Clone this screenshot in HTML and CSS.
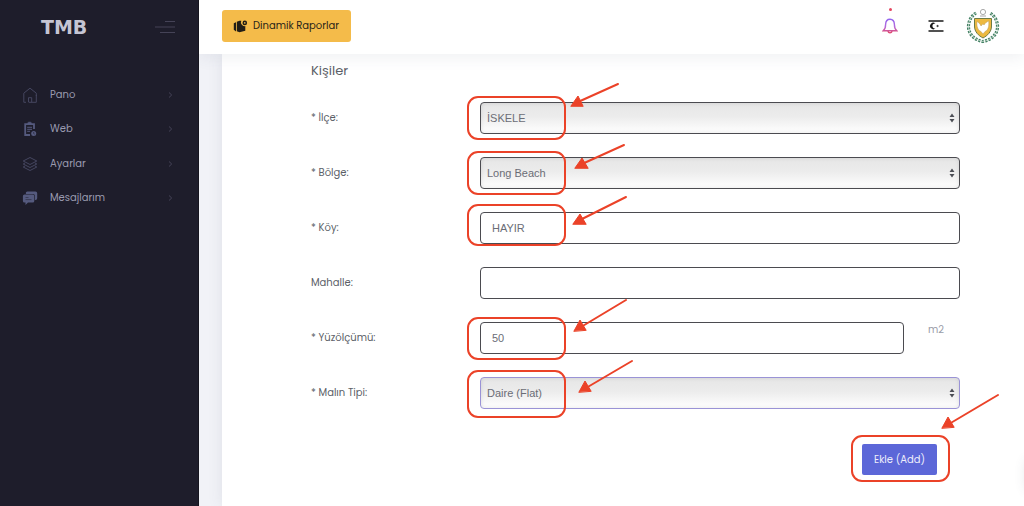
FILE: index.html
```
<!DOCTYPE html>
<html lang="tr">
<head>
<meta charset="utf-8">
<title>TMB</title>
<link rel="stylesheet" href="styles.css">
</head>
<body>
<div class="app">
  <aside class="sidebar">
    <div class="brand">
      <a class="logo" href="#">TMB</a>
      <button class="toggle" aria-label="Menü">
        <svg width="22" height="14" viewBox="0 0 22 14" stroke="#454357" stroke-width="1.2"><path d="M11 1.5h10M1 7h20M6 12.5h15"/></svg>
      </button>
    </div>
    <nav class="menu">
      <a href="#">
        <svg class="icon" viewBox="0 0 16 16" fill="none" stroke="#454660"><path d="M4 15.3H1.8V6.2L8 1.200l6.300 5V9M14.300 8v7.300H7M6.500 15.300v-4.600h3.200v4.600"/></svg>
        <span>Pano</span>
        <svg class="chevron" viewBox="0 0 6 8" fill="none" stroke="#454357"><path d="M1 1.500 3.700 4 1 6.500"/></svg>
      </a>
      <a href="#">
        <svg class="icon" viewBox="0 0 16 16" fill="none" stroke="#555a7e"><path stroke-width="1.800" d="M8 14H3.200V3.200H12V8"/><path stroke-width="2" d="M5.500 2.500h4.200"/><path d="M6.300 1.300h2.500M5.200 6.300H10M5.200 8.300H10M5.200 10.300H8"/><circle cx="11.700" cy="12.500" r="2.500" fill="#555a7e" stroke="none"/><path stroke="#1e1d2b" stroke-width=".6" d="M11.700 11v1.600l1 .6"/></svg>
        <span>Web</span>
        <svg class="chevron" viewBox="0 0 6 8" fill="none" stroke="#454357"><path d="M1 1.500 3.700 4 1 6.500"/></svg>
      </a>
      <a href="#">
        <svg class="icon" viewBox="0 0 16 16" fill="none" stroke="#454660" stroke-linejoin="round"><path d="M8 1.500 14.800 5 8 8.500 1.200 5zM3 7 1.200 8 8 11.500 14.800 8 13 7M3 10l-1.800 1L8 14.500 14.800 11 13 10"/></svg>
        <span>Ayarlar</span>
        <svg class="chevron" viewBox="0 0 6 8" fill="none" stroke="#454357"><path d="M1 1.500 3.700 4 1 6.500"/></svg>
      </a>
      <a href="#">
        <svg class="icon" viewBox="0 0 16 16" fill="#555a7e"><path d="M5.500 1.500h8a1.700 1.700 0 0 1 1.700 1.700v5a1.700 1.700 0 0 1-1.700 1.700h-.6V6a2 2 0 0 0-2-2H4a1.700 1.700 0 0 1 1.500-2.500z"/><path d="M2.500 4.500h8.200A1.600 1.600 0 0 1 12.300 6v5a1.600 1.600 0 0 1-1.600 1.600H6L3.500 15v-2.400h-1A1.600 1.600 0 0 1 .9 11V6a1.600 1.600 0 0 1 1.600-1.500z"/><path stroke="#34364d" stroke-width=".8" d="M3.500 7.500h3M3.500 9.600h6"/></svg>
        <span>Mesajlarım</span>
        <svg class="chevron" viewBox="0 0 6 8" fill="none" stroke="#454357"><path d="M1 1.500 3.700 4 1 6.500"/></svg>
      </a>
    </nav>
  </aside>

  <div class="page">
    <header class="topbar">
      <button class="reports">
        <svg width="15" height="13" viewBox="0 0 15 13" fill="#211d16"><path d="M.8 3.300 3 2.200v9.300L.8 9.800zM3.800 1.800 6.500.7h1.800a3.800 3.800 0 0 0 4 5.400v4.600L6.500 12.300l-2.700-1z"/><circle cx="11.800" cy="2.900" r="2.300"/><circle cx="11.800" cy="2.900" r=".8" fill="#f4bb4a"/></svg>
        <span>Dinamik Raporlar</span>
      </button>
      <div class="tools">
        <button class="bell" aria-label="Bildirimler">
          <svg width="16" height="16" viewBox="0 0 16 16" fill="none" stroke-width="1.400">
            <defs><linearGradient id="bell" x1="0" y1="0" x2="0" y2="1"><stop offset="0" stop-color="#9365ef"/><stop offset=".55" stop-color="#b36adb"/><stop offset="1" stop-color="#e14b72"/></linearGradient></defs>
            <path stroke="url(#bell)" d="M8 1.200C5 1.200 3.700 3.500 3.600 6.500c0 3-.6 4.800-2.400 6.300h13.600c-1.800-1.500-2.400-3.300-2.400-6.300C12.300 3.500 11 1.200 8 1.200zM6 13.300c.4 2 3.600 2 4 0"/>
          </svg>
          <i class="dot"></i>
        </button>
        <button aria-label="Dil">
          <svg width="16" height="12" viewBox="0 0 16 12"><path stroke="#191919" stroke-width="1.300" d="M.5 1h15M.5 11h15"/><path fill="#191919" d="M7.500 3.700A3.200 3.200 0 1 0 7.500 8.300 2.400 2.400 0 1 1 7.500 3.700zM8 6l1-.4L9.100 4.500l.7.9 1-.3-.6.9.6.900-1-.3-.7.900L9 6.400z"/></svg>
        </button>
        <button aria-label="Profil">
          <svg width="34" height="36" viewBox="0 0 34 36" fill="none">
            <path stroke="#438064" stroke-width="3.200" stroke-dasharray="2.200 1.200" d="M10 5C-1 12-1 30 17 33.500C35 30 35 12 24 5"/>
            <path stroke="#dbe9df" stroke-width=".7" d="M10 5C-1 12-1 30 17 33.500C35 30 35 12 24 5"/>
            <circle cx="17" cy="4" r="2.600" stroke="#aaa"/><path stroke="#aaa" d="M14 8h6"/>
            <path fill="#edb940" stroke="#6d7b47" d="M8.500 10.500h17V18c0 6-4 9.500-8.500 12-4.500-2.500-8.500-6-8.500-12z"/>
            <path fill="#fff" stroke="#b99a5c" stroke-width=".5" d="M11 13.500c1.500 1 3 2 4 4.500l2-2.200 1 1.200c1-2 2.500-3 4.700-4 .6 6-.8 9.300-3.700 10.500l-2 2.500-2-2.500c-3-1-4.600-5-4-10z"/>
          </svg>
        </button>
      </div>
    </header>

    <main class="content">
      <form class="card">
        <h1>Kişiler</h1>

        <div class="row">
          <label for="ilce">* İlçe:</label>
          <div class="field">
            <select id="ilce"><option>İSKELE</option></select>
            <svg class="updown" viewBox="0 0 6 10"><path d="M.5 4 3 .5 5.500 4zM.5 6 3 9.500 5.500 6z"/></svg>
            <svg class="mark"><rect x="-12" y="-5" width="97" height="42" rx="10"/><path d="M138-18 98 0"/><path class="tip" d="M91 4 98-6 103 4z"/></svg>
          </div>
        </div>

        <div class="row">
          <label for="bolge">* Bölge:</label>
          <div class="field">
            <select id="bolge"><option>Long Beach</option></select>
            <svg class="updown" viewBox="0 0 6 10"><path d="M.5 4 3 .5 5.500 4zM.5 6 3 9.500 5.500 6z"/></svg>
            <svg class="mark"><rect x="-12" y="-5" width="97" height="42" rx="10"/><path d="M144-12 102 7"/><path class="tip" d="M95 11 102 1 108 11z"/></svg>
          </div>
        </div>

        <div class="row">
          <label for="koy">* Köy:</label>
          <div class="field">
            <input id="koy" type="text" value="HAYIR">
            <svg class="mark"><rect x="-12" y="-7" width="97" height="40" rx="10"/><path d="M146-15 100 8"/><path class="tip" d="M93 12 100 2 106 12z"/></svg>
          </div>
        </div>

        <div class="row">
          <label for="mahalle">Mahalle:</label>
          <div class="field"><input id="mahalle" type="text"></div>
        </div>

        <div class="row">
          <label for="alan">* Yüzölçümü:</label>
          <div class="field measured">
            <input id="alan" type="text" value="50">
            <span class="unit">m2</span>
            <svg class="mark"><rect x="-12" y="-4" width="97" height="41" rx="10"/><path d="M146-22 101 5"/><path class="tip" d="M94 9 100-2 106 8z"/></svg>
          </div>
        </div>

        <div class="row">
          <label for="tip">* Malın Tipi:</label>
          <div class="field">
            <select id="tip" class="active"><option>Daire (Flat)</option></select>
            <svg class="updown" viewBox="0 0 6 10"><path d="M.5 4 3 .5 5.500 4zM.5 6 3 9.500 5.500 6z"/></svg>
            <svg class="mark"><rect x="-12" y="-6" width="97" height="46" rx="10"/><path d="M152-16 106 11"/><path class="tip" d="M99 15 105 4 111 14z"/></svg>
          </div>
        </div>

        <div class="actions">
          <div class="field">
            <button class="add" type="button">Ekle (Add)</button>
            <svg class="mark"><rect x="-10" y="-8" width="97" height="45" rx="10"/><path d="M136-49 87-20"/><path class="tip" d="M80-16 86-27 92-17z"/></svg>
          </div>
        </div>
      </form>
    </main>
  </div>
  <div class="drawer"></div>
</div>
</body>
</html>
```
FILE: styles.css
```
* {
  box-sizing: border-box;
}

body {
  margin: 0;
  font-family: Poppins, Inter, sans-serif;
  font-size: 10px;
  line-height: 16px;
  color: #5c5f68;
  background: #f1f2f7;
}

button {
  font: inherit;
  border: 0;
  padding: 0;
  background: none;
  cursor: pointer;
}

svg {
  display: block;
}

.app {
  position: relative;
  display: flex;
  min-height: 100vh;
  overflow: hidden;
}

.sidebar {
  flex: none;
  width: 199px;
  background: #1e1d2b;
  border-right: 1px solid #16151f;
}

.brand {
  display: flex;
  align-items: center;
  justify-content: space-between;
  height: 54px;
  padding: 0 22px 0 41px;
}

.logo {
  font-family: "DejaVu Sans", sans-serif;
  font-size: 19px;
  font-weight: bold;
  line-height: 20px;
  color: #c5c5d3;
  text-decoration: none;
}

.menu {
  display: flex;
  flex-direction: column;
  padding-top: 23px;
}

.menu a {
  display: flex;
  align-items: center;
  height: 34px;
  padding: 0 24px 0 22px;
  color: #9a9bb0;
  text-decoration: none;
}

.menu a:nth-child(odd) {
  height: 35px;
}

.menu .icon {
  width: 16px;
  height: 16px;
  margin-right: 12px;
}

.chevron {
  width: 6px;
  height: 8px;
  margin-left: auto;
}

.page {
  flex: 1;
  min-width: 0;
  display: flex;
  flex-direction: column;
}

.topbar {
  position: relative;
  z-index: 1;
  display: flex;
  align-items: center;
  justify-content: space-between;
  height: 54px;
  padding: 0 24px 2px 23px;
  background: #fff;
  box-shadow: 0 4px 14px rgba(70, 75, 100, 0.08);
  clip-path: inset(0 0 -24px 0);
}

.reports {
  display: flex;
  align-items: center;
  gap: 5px;
  height: 32px;
  padding: 0 12px 0 11px;
  border-radius: 3px;
  color: #292419;
  background: #f4bb4a;
}

.tools {
  display: flex;
  align-items: center;
  gap: 30px;
}

.tools button:last-child {
  margin-left: -8px;
}

.bell {
  position: relative;
}

.dot {
  position: absolute;
  top: -10px;
  left: 7px;
  width: 3px;
  height: 3px;
  border-radius: 50%;
  background: #e6465f;
}

.content {
  flex: 1;
  display: flex;
  padding-left: 23px;
}

.card {
  flex: 1;
  padding: 8px 64px 24px 89px;
  background: #fff;
  box-shadow: 0 0 14px rgba(70, 75, 100, 0.1);
}

h1 {
  margin: 0 0 22px;
  font-size: 13px;
  font-weight: 400;
  line-height: 18px;
}

.row {
  display: grid;
  grid-template-columns: 169px 1fr;
  margin-bottom: 23px;
}

.row label {
  padding-top: 8px;
}

.field {
  position: relative;
}

input,
select {
  display: block;
  width: 100%;
  height: 32px;
  border: 1px solid #4b4b50;
  border-radius: 4px;
  font-family: "Liberation Sans", Arial, sans-serif;
  font-size: 11px;
  color: #6b6d76;
  background: #fff;
}

input {
  padding: 0 11px;
}

select {
  appearance: none;
  padding: 0 6px;
  background: linear-gradient(#e6e6e6, #ececec 45%, #fff);
  box-shadow: inset 0 0 4px rgba(0, 0, 0, 0.1);
}

select.active {
  border-color: #9a93d6;
}

.updown {
  position: absolute;
  top: 11px;
  right: 5px;
  width: 6px;
  height: 10px;
  fill: #4c4e55;
  pointer-events: none;
}

.measured {
  display: grid;
  grid-template-columns: 1fr 32px;
  column-gap: 24px;
}

.unit {
  color: #9a9ca8;
}

.mark {
  position: absolute;
  top: 0;
  left: 0;
  width: 1px;
  height: 1px;
  overflow: visible;
  fill: none;
  stroke: #eb4228;
  stroke-width: 2;
  stroke-linecap: round;
  pointer-events: none;
}

.mark .tip {
  fill: #eb4228;
  stroke-width: 1;
}

.actions {
  display: flex;
  justify-content: flex-end;
  padding: 12px 23px 0 0;
}

.add {
  width: 75px;
  height: 31px;
  border-radius: 2px;
  color: #eeeefb;
  background: #5c67d8;
}

.drawer {
  position: absolute;
  right: -32px;
  bottom: 16px;
  width: 30px;
  height: 30px;
  border-radius: 4px;
  background: #fff;
  box-shadow: 0 0 12px rgba(70, 75, 100, 0.15);
}
```
